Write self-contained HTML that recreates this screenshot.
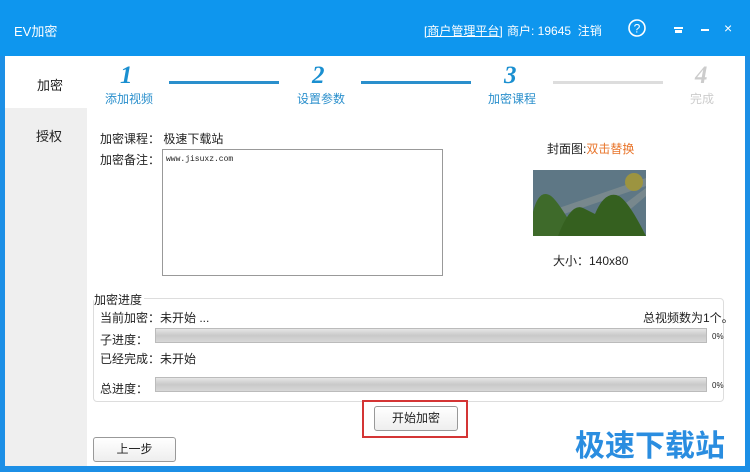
<!DOCTYPE html>
<html><head><meta charset="utf-8"><style>
*{margin:0;padding:0;box-sizing:border-box}
body{width:750px;height:472px;overflow:hidden;background:#1c8fe6;font-family:"Liberation Sans","Noto Sans CJK SC",sans-serif;font-size:12px;color:#222;position:relative}
.abs{position:absolute}
.title{left:0;top:0;width:750px;height:56px;background:#0e96ee}
.win{left:5px;top:56px;width:740px;height:410px;background:#fff}
.side{left:5px;top:108px;width:82px;height:358px;background:#efefef}
.t{position:absolute;white-space:nowrap}
.num{position:absolute;font-family:"Liberation Serif",serif;font-style:italic;font-weight:bold;font-size:25px;color:#1a8fd0}
.line{position:absolute;top:81px;height:3px;background:#2a8fcc;width:110px}
.bar{position:absolute;left:155px;width:552px;height:15px;background:linear-gradient(#e6e6e6,#c9c9c9 50%,#d8d8d8);border:1px solid #bbb}
.btn{position:absolute;border:1px solid #999;border-radius:3px;background:linear-gradient(#fff,#eee);text-align:center}
</style></head><body>
<div class="abs title"></div>
<div class="t" style="left:14px;top:21px;color:#fff;font-size:13px">EV加密</div>
<div class="t" style="left:424px;top:22px;color:#fff;text-decoration:underline">[商户管理平台]</div>
<div class="t" style="left:507px;top:22px;color:#fff">商户: 19645 &nbsp;注销</div>
<svg class="abs" style="left:627px;top:18px" width="20" height="20"><circle cx="10" cy="10" r="8" fill="none" stroke="#fff" stroke-width="1.6"/><text x="10" y="14.5" font-size="12" text-anchor="middle" fill="#fff" font-family="Liberation Sans">?</text></svg>
<div class="abs" style="left:674px;top:27px;width:9px;height:2px;background:#fff"></div>
<div class="abs" style="left:675px;top:30px;width:7px;height:3px;background:#fff"></div>
<div class="abs" style="left:701px;top:29px;width:8px;height:2px;background:#fff"></div>
<div class="t" style="left:724px;top:20px;color:#fff;font-size:14px">×</div>
<div class="abs win"></div>
<div class="abs side"></div>
<div class="t" style="left:37px;top:75px;font-size:13px">加密</div>
<div class="t" style="left:36px;top:126px;font-size:13px">授权</div>
<div class="num" style="left:120px;top:62px">1</div>
<div class="num" style="left:312px;top:62px">2</div>
<div class="num" style="left:504px;top:62px">3</div>
<div class="num" style="left:695px;top:62px;color:#ccc">4</div>
<div class="line" style="left:169px"></div>
<div class="line" style="left:361px"></div>
<div class="line" style="left:553px;background:#ddd"></div>
<div class="t" style="left:105px;top:90px;color:#2a8fcc">添加视频</div>
<div class="t" style="left:297px;top:90px;color:#2a8fcc">设置参数</div>
<div class="t" style="left:488px;top:90px;color:#2a8fcc">加密课程</div>
<div class="t" style="left:690px;top:90px;color:#ccc">完成</div>
<div class="t" style="left:100px;top:130px">加密课程： 极速下载站</div>
<div class="t" style="left:100px;top:151px">加密备注：</div>
<div class="abs" style="left:162px;top:149px;width:281px;height:127px;border:1px solid #999;background:#fff"></div>
<div class="t" style="left:166px;top:155px;font-family:'Liberation Mono',monospace;font-size:8px">www.jisuxz.com</div>
<div class="t" style="left:547px;top:140px">封面图:<span style="color:#e8742a">双击替换</span></div>
<svg class="abs" style="left:533px;top:170px" width="113" height="66"><rect width="113" height="66" fill="#5e7785"/><path d="M113 8 L20 40 L25 46 L113 16Z M113 18 L70 50 L80 54 L113 26Z" fill="#8a9593" opacity=".6"/><circle cx="101" cy="12" r="9" fill="#9c9440"/><path d="M0 66 L0 42 Q6 18 18 26 Q26 32 45 66Z" fill="#3e6a2a"/><path d="M25 66 Q38 32 50 38 Q58 42 62 44 Q72 20 86 26 Q96 32 113 66Z" fill="#35601f"/></svg>
<div class="t" style="left:553px;top:252px">大小：140x80</div>
<div class="abs" style="left:93px;top:298px;width:631px;height:104px;border:1px solid #ddd;border-radius:4px"></div>
<div class="t" style="left:94px;top:291px;background:#fff;padding-right:2px">加密进度</div>
<div class="t" style="left:100px;top:309px">当前加密：未开始 ...</div>
<div class="t" style="left:643px;top:309px">总视频数为1个。</div>
<div class="t" style="left:100px;top:331px">子进度：</div>
<div class="bar" style="top:328px"></div>
<div class="t" style="left:712px;top:332px;font-size:8px">0%</div>
<div class="t" style="left:100px;top:350px">已经完成：未开始</div>
<div class="t" style="left:100px;top:380px">总进度：</div>
<div class="bar" style="top:377px"></div>
<div class="t" style="left:712px;top:381px;font-size:8px">0%</div>
<div class="abs" style="left:362px;top:400px;width:106px;height:38px;border:2px solid #d43535"></div>
<div class="btn" style="left:374px;top:406px;width:84px;height:25px;line-height:23px">开始加密</div>
<div class="btn" style="left:93px;top:437px;width:83px;height:25px;line-height:23px">上一步</div>
<div class="t" style="left:575px;top:421px;font-size:30px;font-weight:bold;color:#2a8de0">极速下载站</div>
</body></html>
